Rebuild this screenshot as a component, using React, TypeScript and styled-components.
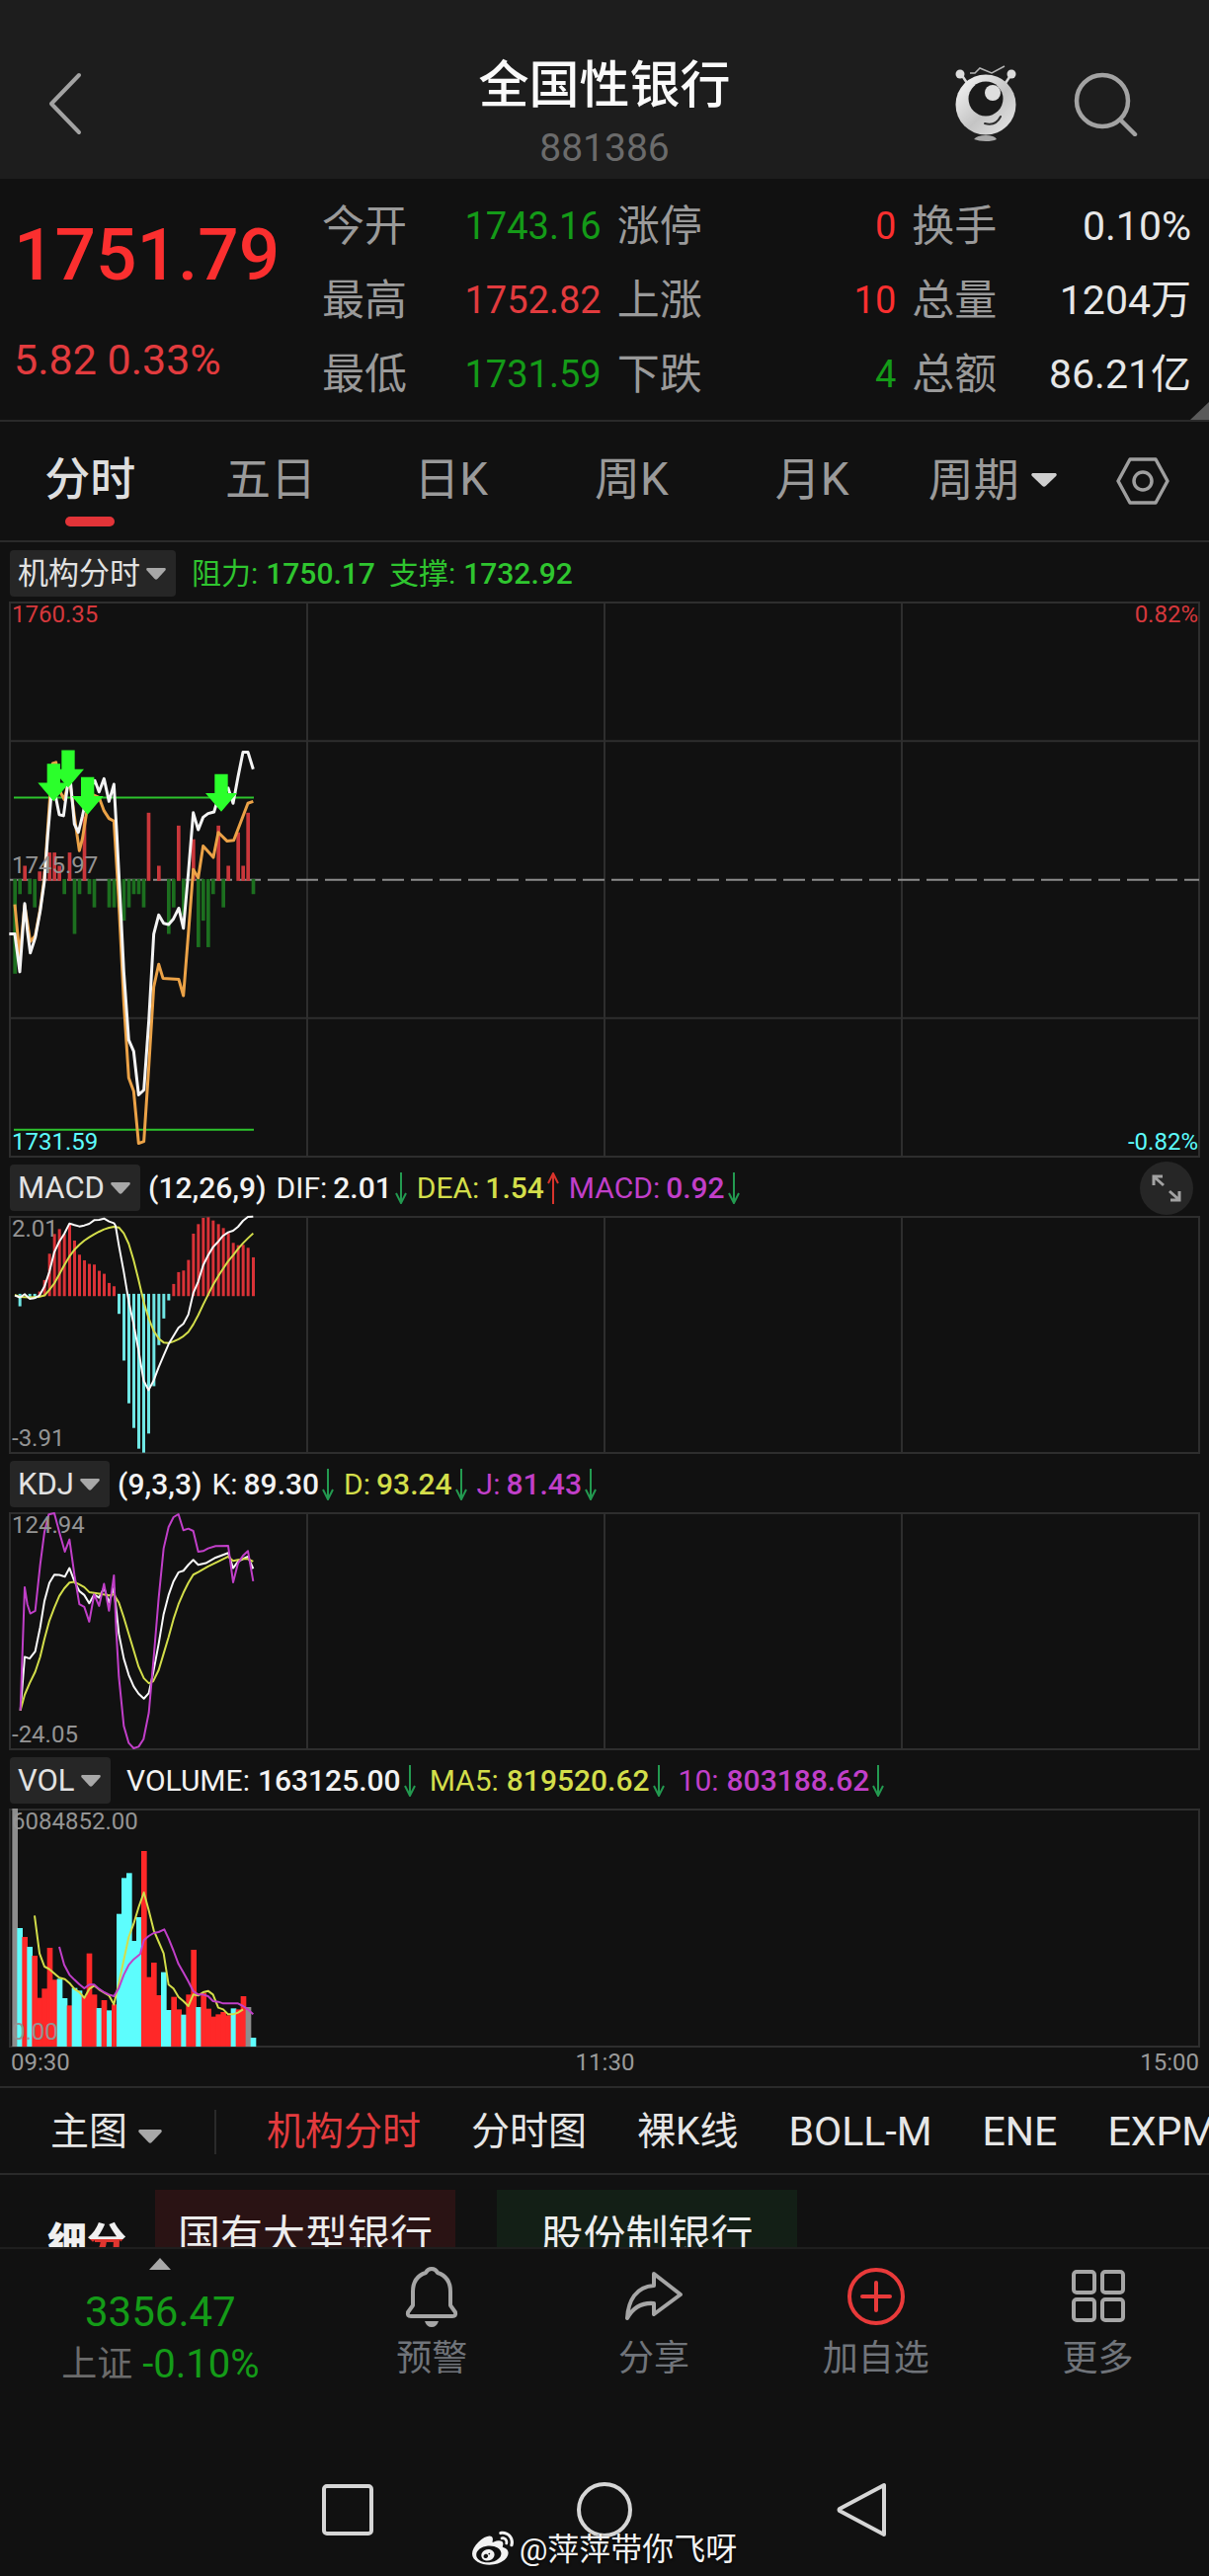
import React from "react";
import styled, { createGlobalStyle } from "styled-components";
import { FaWeibo } from "react-icons/fa";

const FONT = `Roboto, "Noto Sans CJK SC", sans-serif`;

const color = {
  page: "#111111",
  header: "#1d1d1d",
  line: "#2a2a2a",
  grid: "#2e2e2e",
  text: "#e6e6e6",
  muted: "#9a9a9a",
  dim: "#6b6b6b",
  red: "#fb2f2f",
  softRed: "#e23b3e",
  green: "#149b18",
  lime: "#2fc52f",
  cyan: "#5dfdfd",
  yellow: "#d3de4a",
  purple: "#c13fc9",
};

const GlobalStyle = createGlobalStyle`
  *, *::before, *::after { box-sizing: border-box; }
  body { margin: 0; background: ${color.page}; color: ${color.text}; font-family: ${FONT}; }
  button, select { font-family: inherit; border: 0; padding: 0; margin: 0; background: none; color: inherit; }
  select { appearance: none; outline: none; }
  dl, dt, dd, p, h1 { margin: 0; }
`;

const Screen = styled.div`
  display: flex;
  flex-direction: column;
  width: 100%;
  overflow: hidden;
  background: ${color.page};
`;

/* ---------- header ---------- */

const Header = styled.header`
  display: grid;
  grid-template-columns: 1fr auto 1fr;
  align-items: start;
  padding: 57px 42px 6px;
  background: ${color.header};
`;

const HeaderSide = styled.div<{ $end?: boolean }>`
  display: flex;
  align-items: center;
  justify-content: ${(p) => (p.$end ? "flex-end" : "flex-start")};
  gap: 56px;
  height: 96px;
  padding-right: ${(p) => (p.$end ? 30 : 0)}px;
`;

const IconButton = styled.button`
  display: flex;
  align-items: center;
  justify-content: center;
`;

const TitleBlock = styled.div`
  display: flex;
  flex-direction: column;
  align-items: center;
  gap: 8px;
`;

const Title = styled.h1`
  font-size: 51px;
  line-height: 60px;
  font-weight: 500;
  color: #fafafa;
`;

const Code = styled.p`
  font-size: 39px;
  line-height: 50px;
  color: ${color.dim};
`;

/* ---------- quote ---------- */

const Quote = styled.section`
  position: relative;
  display: grid;
  grid-template-columns: 296px repeat(3, 1fr);
  column-gap: 16px;
  padding: 10px 18px 9px 14px;
  border-bottom: 2px solid ${color.line};
`;

const PriceBlock = styled.div`
  display: flex;
  flex-direction: column;
  gap: 34px;
  padding-top: 19px;
  white-space: nowrap;
`;

const Price = styled.p`
  font-size: 73px;
  line-height: 96px;
  font-weight: 500;
  color: ${color.red};
`;

const Change = styled.p`
  font-size: 43px;
  line-height: 48px;
  color: ${color.softRed};
`;

const Stats = styled.dl`
  display: flex;
  flex-direction: column;
`;

const Stat = styled.div`
  display: flex;
  align-items: center;
  justify-content: space-between;
  height: 75px;
  white-space: nowrap;
`;

const StatLabel = styled.dt`
  font-size: 43px;
  line-height: 56px;
  color: ${color.muted};
`;

const StatValue = styled.dd<{ $tone: string; $large?: boolean }>`
  font-size: ${(p) => (p.$large ? 41 : 38)}px;
  line-height: 56px;
  color: ${(p) => p.$tone};
`;

const Corner = styled.span`
  position: absolute;
  right: 0;
  bottom: 0;
  border-style: solid;
  border-width: 0 0 18px 19px;
  border-color: transparent transparent #5a5a5a transparent;
`;

/* ---------- period tabs ---------- */

const Tabs = styled.nav`
  display: grid;
  grid-template-columns: repeat(6, 3fr) 2fr;
  height: 122px;
  padding-right: 6px;
  border-bottom: 2px solid ${color.line};
`;

const Tab = styled.button<{ $active?: boolean }>`
  display: flex;
  flex-direction: column;
  align-items: center;
  gap: 8px;
  padding-top: 28px;
  font-size: 46px;
  line-height: 60px;
  font-weight: ${(p) => (p.$active ? 500 : 400)};
  color: ${(p) => (p.$active ? "#dedede" : color.muted)};

  &::after {
    content: "";
    width: 50px;
    height: 10px;
    border-radius: 5px;
    background: ${(p) => (p.$active ? "#e23438" : "transparent")};
  }
`;

const PeriodSelect = styled.label`
  display: flex;
  align-items: center;
  justify-content: center;
  gap: 12px;
  padding-bottom: 2px;
  color: ${color.muted};

  select {
    font-size: 46px;
    line-height: 60px;
  }
`;

/* ---------- chart panels ---------- */

const Charts = styled.main`
  display: flex;
  flex-direction: column;
  padding: 0 10px;
`;

const PanelHead = styled.div`
  display: flex;
  align-items: center;
  height: 61px;
  padding-top: 2px;
`;

const Pill = styled.label<{ $gap: number }>`
  display: flex;
  align-items: center;
  gap: 6px;
  height: 47px;
  margin-right: ${(p) => p.$gap}px;
  padding: 0 10px 0 8px;
  border-radius: 4px;
  background: #262626;

  select {
    font-size: 31px;
    line-height: 44px;
    color: #e2e2e2;
  }
`;

const Reading = styled.span<{ $tone: string; $roomy?: boolean }>`
  display: flex;
  align-items: center;
  gap: ${(p) => (p.$roomy ? 8 : 6)}px;
  margin-right: ${(p) => (p.$roomy ? 14 : 10)}px;
  font-size: 30px;
  line-height: 44px;
  white-space: nowrap;
  color: ${(p) => p.$tone};

  b {
    font-weight: 500;
  }
`;

const ReadingValue = styled.span`
  display: flex;
  align-items: center;
  gap: 3px;
`;

const ExpandButton = styled(IconButton)`
  width: 54px;
  height: 54px;
  margin: 0 6px 0 auto;
  border-radius: 50%;
  background: #262626;
`;

const Plot = styled.div<{ $height: number }>`
  position: relative;
  height: ${(p) => p.$height}px;

  svg {
    display: block;
    width: 100%;
    height: 100%;
    overflow: visible;
  }

  svg * {
    vector-effect: non-scaling-stroke;
  }
`;

const AxisLabel = styled.span<{
  $tone?: string;
  $edge: "top" | "middle" | "bottom";
  $right?: boolean;
}>`
  position: absolute;
  ${(p) => (p.$right ? "right: 1px;" : "left: 2px;")}
  ${(p) =>
    p.$edge === "top" ? "top: 0;" : p.$edge === "bottom" ? "bottom: 3px;" : "bottom: 50%; margin-bottom: 3px;"}
  font-size: 24px;
  line-height: 24px;
  color: ${(p) => p.$tone ?? "#949494"};
`;

const TimeAxis = styled.div`
  display: flex;
  justify-content: space-between;
  height: 40px;
  padding: 2px 0 0 1px;
  font-size: 24px;
  line-height: 28px;
  color: ${color.muted};
`;

/* ---------- indicator picker ---------- */

const Picker = styled.nav`
  display: flex;
  align-items: center;
  gap: 51px;
  height: 90px;
  padding: 2px 0 0 51px;
  border-top: 2px solid ${color.line};
  border-bottom: 2px solid ${color.line};
  overflow: hidden;
`;

const MainSelect = styled.label`
  display: flex;
  align-items: center;
  gap: 10px;
  padding-right: 2px;

  select {
    font-size: 39px;
    line-height: 52px;
    color: ${color.text};
  }

  svg {
    margin-top: 10px;
  }
`;

const Divider = styled.span`
  flex: none;
  width: 2px;
  height: 45px;
  background: ${color.line};
`;

const PickerItem = styled.button<{ $active?: boolean; $latin?: boolean }>`
  flex: none;
  font-size: ${(p) => (p.$latin ? 41 : 39)}px;
  line-height: 52px;
  color: ${(p) => (p.$active ? color.softRed : color.text)};
`;

/* ---------- sub-sectors ---------- */

const Sectors = styled.section`
  display: flex;
  align-items: flex-start;
  height: 73px;
  padding: 15px 0 0 48px;
  overflow: hidden;
`;

const SectorMark = styled.span`
  display: flex;
  flex: none;
  width: 109px;
  padding-top: 24px;
  font-size: 40px;
  line-height: 60px;
  font-weight: 900;
  color: #f0f0f0;

  span {
    color: transparent;
    background: linear-gradient(#f0f0f0 26px, #e0352f 26px);
    background-clip: text;
  }
`;

const SectorTile = styled.button<{ $up?: boolean }>`
  flex: none;
  width: 304px;
  height: 92px;
  margin-right: 42px;
  padding-top: 2px;
  font-size: 43px;
  line-height: 90px;
  color: #ececec;
  background: ${(p) => (p.$up ? "#2a1314" : "#131f16")};
`;

/* ---------- bottom bars ---------- */

const ActionBar = styled.footer`
  display: grid;
  grid-template-columns: 13fr repeat(4, 9fr);
  height: 190px;
  border-top: 2px solid #1f1f1f;
`;

const IndexBox = styled.button`
  display: flex;
  flex-direction: column;
  align-items: center;
  padding-top: 9px;
  white-space: nowrap;
`;

const IndexValue = styled.span`
  margin-top: 15px;
  font-size: 42px;
  line-height: 56px;
  color: ${color.green};
`;

const IndexChange = styled.span`
  display: flex;
  gap: 10px;
  font-size: 40px;
  line-height: 50px;
  color: ${color.green};

  small {
    font-size: 36px;
    color: ${color.dim};
  }
`;

const Action = styled.button`
  display: flex;
  flex-direction: column;
  align-items: center;
  gap: 8px;
  padding-top: 16px;
  font-size: 36px;
  line-height: 46px;
  color: #70747a;
`;

const SystemNav = styled.nav`
  position: relative;
  display: flex;
  justify-content: center;
  gap: 200px;
  height: 142px;
  padding-top: 46px;
`;

const NavButton = styled(IconButton)`
  width: 60px;
  height: 60px;
`;

const Watermark = styled.p`
  position: absolute;
  left: 0;
  right: 0;
  bottom: 4px;
  display: flex;
  align-items: center;
  justify-content: center;
  gap: 6px;
  font-size: 32px;
  line-height: 44px;
  color: #f2f2f2;
  text-shadow: 0 1px 3px #000;
`;

/* ---------- icons ---------- */

const Caret = ({ width = 20, height = 12, fill = "#a8a8a8" }) => (
  <svg width={width} height={height} viewBox="0 0 20 12" preserveAspectRatio="none" aria-hidden="true">
    <path d="M1 0h18q1.500 1 .3 2.500L11.500 11q-1.500 1.500-3 0L.700 2.500Q-.5 1 1 0z" fill={fill} />
  </svg>
);

const ArrowDown = () => (
  <svg width="12" height="32" viewBox="0 0 12 32" fill="none" stroke="#239a50" strokeWidth="2" aria-label="下降">
    <path d="M6 0v31M1 21l5 10 5-10" />
  </svg>
);

const ArrowUp = () => (
  <svg width="12" height="32" viewBox="0 0 12 32" fill="none" stroke="#d8342c" strokeWidth="2" aria-label="上升">
    <path d="M6 32V1M1 11L6 1l5 10" />
  </svg>
);

const BackIcon = () => (
  <svg width="48" height="66" viewBox="0 0 48 66" fill="none" stroke="#a3a3a3" strokeWidth="4" strokeLinecap="round" strokeLinejoin="round">
    <path d="M38 4L10 33l28 29" />
  </svg>
);

const MascotIcon = () => (
  <svg width="64" height="78" viewBox="0 0 64 78">
    <defs>
      <linearGradient id="ball" x1="0" y1="0" x2="1" y2="1">
        <stop offset="0" stopColor="#fafafa" />
        <stop offset=".55" stopColor="#c4c4c4" />
        <stop offset="1" stopColor="#e8e8e8" />
      </linearGradient>
    </defs>
    <path d="M16 8h5l5-5 12 5 13-7" fill="none" stroke="#b4b4b4" strokeWidth="1.500" />
    <path d="M7 9l6 9M58 9l-6 9" stroke="#d6d6d6" strokeWidth="2.500" />
    <circle cx="6" cy="9" r="4.500" fill="#dcdcdc" />
    <circle cx="58" cy="9" r="4.500" fill="#dcdcdc" />
    <circle cx="32" cy="40" r="30.500" fill="url(#ball)" />
    <circle cx="32" cy="34" r="17.500" fill="#1a1a1a" />
    <circle cx="39" cy="28" r="8" fill="#dedede" />
    <path d="M31 59q11 3 16-7" fill="none" stroke="#2c2c2c" strokeWidth="2" strokeLinecap="round" />
    <path d="M20 75q3-4 12-4t11 4q-4 2-11 2t-12-2z" fill="#a8a8a8" />
  </svg>
);

const SearchIcon = () => (
  <svg width="66" height="66" viewBox="0 0 66 66" fill="none" stroke="#a3a3a3" strokeWidth="4.500" strokeLinecap="round">
    <circle cx="30" cy="30" r="26" />
    <path d="M49 50l14 14" />
  </svg>
);

const HexIcon = () => (
  <svg width="54" height="50" viewBox="0 0 54 50" fill="none" stroke="#9f9f9f" strokeWidth="3.500" strokeLinejoin="round">
    <path d="M14 3h26l12 22-12 22H14L2 25z" />
    <circle cx="27" cy="25" r="9" />
  </svg>
);

const ExpandIcon = () => (
  <svg width="30" height="30" viewBox="0 0 30 30" fill="none" stroke="#a2a2a2" strokeWidth="3">
    <path d="M2 12V3h9M3 4l9 8M28 18v9h-9M27 26l-9-8" />
  </svg>
);

const BellIcon = () => (
  <svg width="60" height="64" viewBox="0 0 60 64" fill="none" stroke="#a6a6a6" strokeWidth="4" strokeLinejoin="round">
    <path d="M30 4c-3 0-5 2-6 4C15 11 11 18 11 27v14l-5 7q-1 4 3 4h42q4 0 3-4l-5-7V27c0-9-4-16-13-19-1-2-3-4-6-4z" />
    <path d="M23 57h14q-2 6-7 6t-7-6z" fill="#a6a6a6" stroke="none" />
  </svg>
);

const ShareIcon = () => (
  <svg width="64" height="64" viewBox="0 0 64 64" fill="none" stroke="#a6a6a6" strokeWidth="4" strokeLinejoin="round">
    <path d="M32 9l27 21-27 20V39C20 38 11 43 5 54 6 36 14 22 32 21z" />
  </svg>
);

const AddIcon = () => (
  <svg width="64" height="64" viewBox="0 0 64 64" fill="none" stroke="#e93a3a" strokeWidth="4" strokeLinecap="round">
    <circle cx="32" cy="32" r="27" />
    <path d="M32 18v28M18 32h28" />
  </svg>
);

const MoreIcon = () => (
  <svg width="64" height="64" viewBox="0 0 64 64" fill="none" stroke="#a6a6a6" strokeWidth="4">
    <rect x="7" y="7" width="21" height="21" rx="3" />
    <rect x="36" y="7" width="21" height="21" rx="3" />
    <rect x="7" y="35" width="21" height="21" rx="3" />
    <rect x="36" y="35" width="21" height="21" rx="3" />
  </svg>
);

/* ---------- chart data, in plot units ---------- */

type Bar = [x: number, y: number];

const FRAME_X = 30;
const FRAME_W = 3612;
const quarterLines = [1, 2, 3].map((n) => FRAME_X + (FRAME_W * n) / 4);

const series = {
  price:
    "28,900 45,900 60,1000 75,820 83,890 92,950 107,910 122,840 135,760 145,640 155,540 165,520 180,585 193,588 205,510 215,505 226,610 238,632 250,590 265,530 288,495 301,525 316,490 331,550 346,505 355,640 368,860 376,1000 391,1180 406,1210 421,1325 437,1312 452,1130 467,900 482,850 497,872 512,875 527,860 543,832 557,885 572,740 587,580 602,625 617,592 632,582 650,578 663,540 693,515 708,555 723,485 738,420 753,420 769,465",
  average:
    "45,822 60,960 75,825 92,920 107,905 122,835 135,750 150,560 160,450 170,447 180,520 195,545 211,490 226,590 241,680 250,650 262,585 275,530 301,540 316,575 331,595 346,602 360,800 376,1080 391,1280 406,1315 421,1453 437,1448 452,1250 467,1040 482,980 495,1017 543,1020 557,1063 572,900 587,730 602,752 617,668 648,698 663,632 690,655 710,653 753,555 769,550",
  dif:
    "45,422 60,428 75,418 90,432 105,430 120,422 135,395 150,350 165,290 180,258 195,235 211,203 226,208 241,212 256,209 271,204 286,193 301,192 316,188 331,197 346,202 351,210 361,270 376,350 391,440 406,510 421,590 436,680 451,710 467,680 482,640 497,605 512,570 527,545 542,520 557,508 572,480 587,415 602,380 617,330 632,300 647,275 663,258 678,240 693,230 708,225 723,213 738,195 753,183 769,182",
  dea:
    "45,420 60,426 90,428 120,426 135,422 150,405 165,385 180,358 195,330 211,303 226,283 241,268 256,255 271,245 286,236 301,228 316,221 331,216 346,213 361,215 376,233 391,265 406,315 421,375 436,440 451,490 467,530 482,553 497,565 512,567 527,562 542,555 557,546 572,533 587,510 602,482 617,450 632,420 647,390 663,363 678,340 693,318 708,300 723,280 738,263 753,248 769,233",
  k:
    "62,783 75,620 90,625 107,603 122,530 135,450 150,395 165,370 180,371 197,376 211,350 226,390 241,420 256,432 271,457 286,430 301,440 316,410 331,455 346,410 361,550 376,625 391,675 406,710 421,732 437,747 452,730 465,670 482,580 497,490 512,432 527,390 542,363 557,358 572,340 587,325 602,340 625,335 655,318 693,304 708,350 723,330 738,322 753,315 769,352",
  d:
    "62,783 75,735 90,700 107,665 122,620 135,565 150,510 165,470 180,435 195,412 211,394 226,392 241,400 256,408 271,423 301,428 331,433 346,430 361,455 376,500 391,550 406,600 421,650 437,685 452,700 465,695 482,660 497,610 512,560 527,505 542,460 557,425 572,395 587,370 602,362 632,345 663,330 693,315 708,328 738,322 753,322 769,330",
  j:
    "62,783 75,408 83,460 92,488 107,480 122,340 135,240 148,187 165,183 180,240 197,300 211,263 226,370 241,460 256,468 271,513 286,430 301,465 316,398 331,480 346,372 353,540 361,680 376,830 391,882 406,898 421,893 436,870 452,790 467,620 482,440 497,290 512,225 527,195 542,186 557,235 572,230 587,237 602,300 617,298 632,290 655,283 693,282 708,393 723,335 738,312 753,298 769,390",
  ma5:
    "105,505 120,620 135,660 150,668 180,694 197,698 211,710 226,728 241,738 256,755 271,728 286,718 301,730 331,748 346,775 361,710 376,640 391,570 406,530 421,480 437,435 452,490 467,550 482,585 497,620 512,715 527,727 542,752 557,765 572,780 587,745 602,748 617,738 632,734 647,745 663,785 678,790 693,805 708,805 723,800 738,790",
  ma10:
    "180,600 195,655 211,685 226,700 241,714 256,726 271,715 286,715 301,728 316,738 331,745 346,750 361,725 376,685 391,655 406,638 426,622 437,580 452,567 467,558 482,555 499,547 512,575 527,612 542,652 557,678 572,705 587,735 602,745 617,745 632,750 647,765 663,767 678,772 700,772 723,772 738,780 753,790 769,805",
};

const flowUp: Bar[] = [
  [75, 720], [120, 735], [135, 735], [150, 685], [165, 685], [180, 720], [211, 685], [256, 590], [451, 580], [482, 720],
  [542, 614], [587, 650], [663, 614], [693, 720], [723, 632], [738, 720], [753, 580],
];
const flowDown: Bar[] = [
  [45, 1005], [60, 795], [90, 795], [105, 830], [195, 795], [226, 900], [241, 795], [271, 795], [286, 830], [331, 830],
  [346, 830], [361, 830], [376, 865], [391, 830], [406, 795], [421, 795], [436, 830], [512, 900], [527, 830], [557, 850],
  [602, 935], [617, 865], [632, 935], [647, 795], [678, 830], [769, 795],
];
const sellSignals: Bar[] = [[163, 550], [207, 514], [266, 585], [672, 577]];

const macdBars: Bar[] = [
  [60, 455], [90, 432], [105, 432], [120, 410], [135, 375], [150, 295], [165, 235], [180, 220], [195, 235], [211, 205],
  [226, 255], [241, 298], [256, 315], [271, 326], [286, 328], [301, 347], [316, 356], [331, 384], [346, 394], [361, 478],
  [376, 620], [391, 750], [406, 825], [421, 888], [436, 900], [451, 842], [467, 698], [482, 573], [497, 492], [512, 437],
  [527, 387], [542, 351], [557, 346], [572, 314], [587, 234], [602, 205], [617, 186], [632, 184], [647, 194], [663, 205],
  [678, 217], [693, 232], [708, 262], [723, 269], [738, 268], [753, 277], [769, 306],
];

const volumeBars =
  "g180 c543 r570 c600 r627 r755 r727 r603 r700 c697 c756 r778 c725 c733 r750 r620 r745 c786 r762 c793 r775 c500 c391 c376 c582 c510 r309 r692 r648 r747 c677 c792 r752 r790 c806 r745 r609 c783 r740 r788 r812 r805 r798 r808 c787 r790 r750 g783 c876"
    .split(" ")
    .map((s, i) => ({ tone: s[0], x: 45 + Math.round(i * 15.08), top: Number(s.slice(1)) }));

const volumeTone: Record<string, string> = { g: "#8d8d8d", c: color.cyan, r: "#ff2828" };

const Frame = ({ y, h, columns = true, rows = false }: { y: number; h: number; columns?: boolean; rows?: boolean }) => (
  <g fill="none" stroke={color.grid} strokeWidth="2">
    <rect x={FRAME_X} y={y} width={FRAME_W} height={h} />
    {columns && quarterLines.map((x) => <path key={x} d={`M${x} ${y}v${h}`} />)}
    {rows && [0.25, 0.75].map((r) => <path key={r} d={`M${FRAME_X} ${y + h * r}h${FRAME_W}`} />)}
  </g>
);

const Line = ({ points, stroke, width = 2 }: { points: string; stroke: string; width?: number }) => (
  <polyline points={points} fill="none" stroke={stroke} strokeWidth={width} strokeLinejoin="round" />
);

const PriceChart = () => (
  <svg viewBox="30 25 3612 1463" preserveAspectRatio="none" role="img" aria-label="分时走势">
    <Frame y={25} h={1463} rows />
    <path d="M30 757H3642" stroke="#8c8c8c" strokeWidth="2" strokeDasharray="22 7" />
    {flowUp.map(([x, y]) => (
      <rect key={x} x={x - 5} y={y} width="11" height={760 - y} fill="#c9373b" />
    ))}
    {flowDown.map(([x, y]) => (
      <rect key={x} x={x - 5} y="755" width="11" height={y - 755} fill="#1c6f1f" />
    ))}
    <path d="M42 540H771M42 1417H771" stroke="#2dc32d" strokeWidth="2" />
    <Line points={series.average} stroke="#eba247" width={3} />
    <Line points={series.price} stroke="#f4f4f4" width={3} />
    {sellSignals.map(([x, y]) => (
      <path key={x} d={`M${x} ${y}l-48 -49h28v-50h40v50h28z`} fill="#2bff2b" />
    ))}
  </svg>
);

const MacdChart = () => (
  <svg viewBox="30 183 3612 718" preserveAspectRatio="none" role="img" aria-label="MACD">
    <Frame y={183} h={718} />
    {macdBars.map(([x, y]) => (
      <rect
        key={x}
        x={x - 4}
        width="9"
        y={Math.min(y, 417)}
        height={y < 417 ? 424 - y : y - 417}
        fill={y < 417 ? "#d93237" : "#6fe6e4"}
      />
    ))}
    <Line points={series.dea} stroke={color.yellow} />
    <Line points={series.dif} stroke="#fafafa" />
  </svg>
);

const KdjChart = () => (
  <svg viewBox="30 183 3612 718" preserveAspectRatio="none" role="img" aria-label="KDJ">
    <Frame y={183} h={718} />
    <Line points={series.k} stroke="#fafafa" />
    <Line points={series.d} stroke={color.yellow} />
    <Line points={series.j} stroke={color.purple} />
  </svg>
);

const VolumeChart = () => (
  <svg viewBox="30 183 3612 720" preserveAspectRatio="none" role="img" aria-label="成交量">
    <Frame y={183} h={720} columns={false} />
    {volumeBars.map((b) => (
      <rect key={b.x} x={b.x - 8} y={b.top} width="17" height={903 - b.top} fill={volumeTone[b.tone]} />
    ))}
    <Line points={series.ma5} stroke={color.yellow} />
    <Line points={series.ma10} stroke={color.purple} />
  </svg>
);

/* ---------- composed parts ---------- */

const stats = [
  [
    ["今开", "1743.16", color.green],
    ["最高", "1752.82", color.softRed],
    ["最低", "1731.59", color.green],
  ],
  [
    ["涨停", "0", color.red],
    ["上涨", "10", color.red],
    ["下跌", "4", color.green],
  ],
  [
    ["换手", "0.10%", color.text],
    ["总量", "1204万", color.text],
    ["总额", "86.21亿", color.text],
  ],
];

type ReadingData = { label?: string; value: string; tone: string; trend?: "up" | "down" };

const IndicatorHead = ({
  name,
  gap,
  roomy,
  readings,
  children,
}: {
  name: string;
  gap: number;
  roomy?: boolean;
  readings: ReadingData[];
  children?: React.ReactNode;
}) => (
  <PanelHead>
    <Pill $gap={gap}>
      <select aria-label={`${name}指标`}>
        <option>{name}</option>
      </select>
      <Caret />
    </Pill>
    {readings.map((r) => (
      <Reading key={r.value} $tone={r.tone} $roomy={roomy}>
        {r.label && <span>{r.label}:</span>}
        <ReadingValue>
          <b>{r.value}</b>
          {r.trend === "down" && <ArrowDown />}
          {r.trend === "up" && <ArrowUp />}
        </ReadingValue>
      </Reading>
    ))}
    {children}
  </PanelHead>
);

export default function App() {
  return (
    <Screen>
      <GlobalStyle />
      <Header>
        <HeaderSide>
          <IconButton aria-label="返回">
            <BackIcon />
          </IconButton>
        </HeaderSide>
        <TitleBlock>
          <Title>全国性银行</Title>
          <Code>881386</Code>
        </TitleBlock>
        <HeaderSide $end>
          <IconButton aria-label="助手">
            <MascotIcon />
          </IconButton>
          <IconButton aria-label="搜索">
            <SearchIcon />
          </IconButton>
        </HeaderSide>
      </Header>

      <Quote>
        <PriceBlock>
          <Price>1751.79</Price>
          <Change>5.82 0.33%</Change>
        </PriceBlock>
        {stats.map((column, i) => (
          <Stats key={i}>
            {column.map(([label, value, tone]) => (
              <Stat key={label}>
                <StatLabel>{label}</StatLabel>
                <StatValue $tone={tone} $large={i === 2}>
                  {value}
                </StatValue>
              </Stat>
            ))}
          </Stats>
        ))}
        <Corner />
      </Quote>

      <Tabs>
        <Tab $active>分时</Tab>
        <Tab>五日</Tab>
        <Tab>日K</Tab>
        <Tab>周K</Tab>
        <Tab>月K</Tab>
        <PeriodSelect>
          <select aria-label="周期">
            <option>周期</option>
          </select>
          <Caret width={26} height={14} fill="#cfcfcf" />
        </PeriodSelect>
        <IconButton aria-label="设置">
          <HexIcon />
        </IconButton>
      </Tabs>

      <Charts>
        <IndicatorHead
          name="机构分时"
          gap={16}
          roomy
          readings={[
            { label: "阻力", value: "1750.17", tone: color.lime },
            { label: "支撑", value: "1732.92", tone: color.lime },
          ]}
        />
        <Plot $height={561}>
          <PriceChart />
          <AxisLabel $edge="top" $tone="#d5383c">1760.35</AxisLabel>
          <AxisLabel $edge="top" $tone="#d5383c" $right>0.82%</AxisLabel>
          <AxisLabel $edge="middle">1745.97</AxisLabel>
          <AxisLabel $edge="bottom" $tone={color.cyan}>1731.59</AxisLabel>
          <AxisLabel $edge="bottom" $tone={color.cyan} $right>-0.82%</AxisLabel>
        </Plot>

        <IndicatorHead
          name="MACD"
          gap={8}
          readings={[
            { value: "(12,26,9)", tone: "#f2f2f2" },
            { label: "DIF", value: "2.01", tone: "#f2f2f2", trend: "down" },
            { label: "DEA", value: "1.54", tone: color.yellow, trend: "up" },
            { label: "MACD", value: "0.92", tone: color.purple, trend: "down" },
          ]}
        >
          <ExpandButton aria-label="全屏">
            <ExpandIcon />
          </ExpandButton>
        </IndicatorHead>
        <Plot $height={239}>
          <MacdChart />
          <AxisLabel $edge="top">2.01</AxisLabel>
          <AxisLabel $edge="bottom">-3.91</AxisLabel>
        </Plot>

        <IndicatorHead
          name="KDJ"
          gap={8}
          readings={[
            { value: "(9,3,3)", tone: "#f2f2f2" },
            { label: "K", value: "89.30", tone: "#f2f2f2", trend: "down" },
            { label: "D", value: "93.24", tone: color.yellow, trend: "down" },
            { label: "J", value: "81.43", tone: color.purple, trend: "down" },
          ]}
        />
        <Plot $height={239}>
          <KdjChart />
          <AxisLabel $edge="top">124.94</AxisLabel>
          <AxisLabel $edge="bottom">-24.05</AxisLabel>
        </Plot>

        <IndicatorHead
          name="VOL"
          gap={16}
          roomy
          readings={[
            { label: "VOLUME", value: "163125.00", tone: "#f2f2f2", trend: "down" },
            { label: "MA5", value: "819520.62", tone: color.yellow, trend: "down" },
            { label: "10", value: "803188.62", tone: color.purple, trend: "down" },
          ]}
        />
        <Plot $height={240}>
          <VolumeChart />
          <AxisLabel $edge="top">6084852.00</AxisLabel>
          <AxisLabel $edge="bottom">0.00</AxisLabel>
        </Plot>
        <TimeAxis>
          <span>09:30</span>
          <span>11:30</span>
          <span>15:00</span>
        </TimeAxis>
      </Charts>

      <Picker>
        <MainSelect>
          <select aria-label="主图">
            <option>主图</option>
          </select>
          <Caret width={24} height={14} />
        </MainSelect>
        <Divider />
        <PickerItem $active>机构分时</PickerItem>
        <PickerItem>分时图</PickerItem>
        <PickerItem>裸K线</PickerItem>
        <PickerItem $latin>BOLL-M</PickerItem>
        <PickerItem $latin>ENE</PickerItem>
        <PickerItem $latin>EXPM</PickerItem>
      </Picker>

      <Sectors>
        <SectorMark>
          细<span>分</span>
        </SectorMark>
        <SectorTile $up>国有大型银行</SectorTile>
        <SectorTile>股份制银行</SectorTile>
      </Sectors>

      <ActionBar>
        <IndexBox>
          <svg width="22" height="12" viewBox="0 0 22 12" aria-hidden="true">
            <path d="M11 0l11 12H0z" fill="#a8a8a8" />
          </svg>
          <IndexValue>3356.47</IndexValue>
          <IndexChange>
            <small>上证</small>-0.10%
          </IndexChange>
        </IndexBox>
        <Action>
          <BellIcon />
          预警
        </Action>
        <Action>
          <ShareIcon />
          分享
        </Action>
        <Action>
          <AddIcon />
          加自选
        </Action>
        <Action>
          <MoreIcon />
          更多
        </Action>
      </ActionBar>

      <SystemNav>
        <NavButton aria-label="最近任务">
          <svg width="60" height="60" viewBox="0 0 60 60" fill="none" stroke="#d6d6d6" strokeWidth="4">
            <rect x="6" y="6" width="48" height="48" rx="3" />
          </svg>
        </NavButton>
        <NavButton aria-label="主屏幕">
          <svg width="60" height="60" viewBox="0 0 60 60" fill="none" stroke="#d6d6d6" strokeWidth="4">
            <circle cx="30" cy="30" r="26" />
          </svg>
        </NavButton>
        <NavButton aria-label="返回上一页">
          <svg width="60" height="60" viewBox="0 0 60 60" fill="none" stroke="#d6d6d6" strokeWidth="4" strokeLinejoin="round">
            <path d="M53 5v50L8 31q-1-1 0-2z" />
          </svg>
        </NavButton>
        <Watermark>
          <FaWeibo size={42} />
          @萍萍带你飞呀
        </Watermark>
      </SystemNav>
    </Screen>
  );
}
